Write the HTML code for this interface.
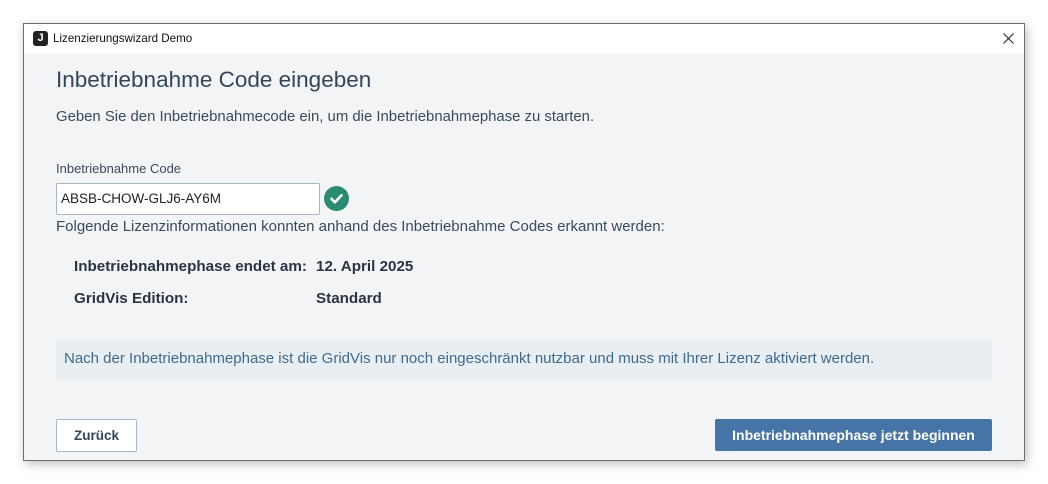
<!DOCTYPE html>
<html><head><style>
body{margin:0;width:1048px;height:484px;background:#fff;position:relative;overflow:hidden;font-family:"Liberation Sans",sans-serif}
.win{position:absolute;left:23px;top:23px;width:1000px;height:436px;border:1px solid #6e6e6e;background:#f3f4f6;box-shadow:2px 3px 10px rgba(0,0,0,.25)}
.tb{height:30px;background:#fff;position:relative}
.tb .ic{position:absolute;left:9px;top:7px;width:15px;height:15px;background:#222;border-radius:3px;color:#fff;font:bold 11px "Liberation Sans";text-align:center;line-height:15px}
.tb .t{position:absolute;left:29px;top:8px;font-size:11.6px;color:#111}
.a{position:absolute;color:#3a4a5c;white-space:nowrap}
</style></head><body>
<div class="win">
<div class="tb"><div class="ic">J</div><div class="t">Lizenzierungswizard Demo</div>
<svg style="position:absolute;right:10px;top:9px" width="11" height="11"><path d="M0.5 0.5L10.5 10.5M10.5 0.5L0.5 10.5" stroke="#222" stroke-width="1.1"/></svg></div>
<div class="a" style="left:32px;top:43px;font-size:22.5px;color:#34475a">Inbetriebnahme Code eingeben</div>
<div class="a" style="left:32px;top:85px;font-size:14.9px">Geben Sie den Inbetriebnahmecode ein, um die Inbetriebnahmephase zu starten.</div>
<div class="a" style="left:32px;top:137px;font-size:13px">Inbetriebnahme Code</div>
<div style="position:absolute;left:32px;top:159px;background:#fff;border:1px solid #a9b6c6;border-radius:2px;font-size:13.5px;color:#222;line-height:30px;padding-left:4px;box-sizing:border-box;width:264px;height:32px">ABSB-CHOW-GLJ6-AY6M</div>
<svg style="position:absolute;left:300px;top:162px" width="25" height="25"><circle cx="12.5" cy="12.5" r="12.5" fill="#2a8a72"/><path d="M7.5 12.8l3.5 3.5 6.5-7" stroke="#fff" stroke-width="2.6" fill="none" stroke-linecap="round" stroke-linejoin="round"/></svg>
<div class="a" style="left:32px;top:194px;font-size:15px">Folgende Lizenzinformationen konnten anhand des Inbetriebnahme Codes erkannt werden:</div>
<div class="a" style="left:50px;top:234px;font-size:15.2px;font-weight:bold;color:#2a3442">Inbetriebnahmephase endet am:</div>
<div class="a" style="left:292px;top:234px;font-size:15.2px;font-weight:bold;color:#2a3442">12. April 2025</div>
<div class="a" style="left:50px;top:266px;font-size:15.2px;font-weight:bold;color:#2a3442">GridVis Edition:</div>
<div class="a" style="left:292px;top:266px;font-size:15.2px;font-weight:bold;color:#2a3442">Standard</div>
<div style="position:absolute;left:32px;top:315px;width:936px;height:40px;background:#e9eef3"></div>
<div class="a" style="left:40px;top:326px;font-size:15px;color:#3e6a8e">Nach der Inbetriebnahmephase ist die GridVis nur noch eingeschränkt nutzbar und muss mit Ihrer Lizenz aktiviert werden.</div>
<div style="position:absolute;left:32px;top:395px;width:79px;height:31px;background:#fff;border:1px solid #a9b6c6;border-radius:2px;font-size:13.5px;font-weight:bold;color:#34475a;text-align:center;line-height:31px">Zurück</div>
<div style="position:absolute;left:691px;top:395px;width:277px;height:32px;background:#4674a6;border-radius:2px;font-size:14px;font-weight:bold;color:#fff;text-align:center;line-height:32px">Inbetriebnahmephase jetzt beginnen</div>
</div>
</body></html>
